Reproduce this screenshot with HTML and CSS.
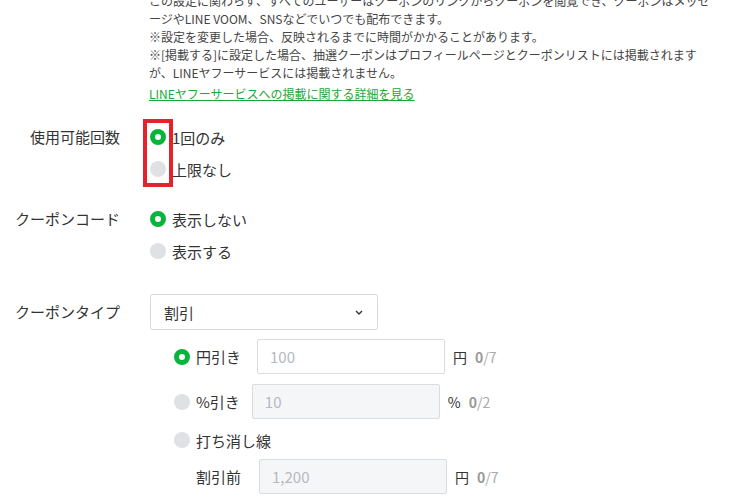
FILE: index.html
```html
<!DOCTYPE html>
<html lang="ja">
<head>
<meta charset="utf-8">
<title>クーポン設定</title>
<link rel="stylesheet" href="styles.css">
</head>
<body>
<div class="page">
  <div class="desc">
    <p>この設定に関わらず、すべてのユーザーはクーポンのリンクからクーポンを閲覧でき、クーポンはメッセ<br>ージやLINE VOOM、SNSなどでいつでも配布できます。</p>
    <p>※設定を変更した場合、反映されるまでに時間がかかることがあります。</p>
    <p>※[掲載する]に設定した場合、抽選クーポンはプロフィールページとクーポンリストには掲載されます<br>が、LINEヤフーサービスには掲載されません。</p>
    <a class="link" href="#">LINEヤフーサービスへの掲載に関する詳細を見る</a>
  </div>

  <div class="row">
    <div class="label">使用可能回数</div>
    <div class="options">
      <label class="radio on"><span class="dot"></span>1回のみ</label>
      <label class="radio"><span class="dot"></span>上限なし</label>
      <span class="highlight"></span>
    </div>
  </div>

  <div class="row">
    <div class="label">クーポンコード</div>
    <div class="options">
      <label class="radio on"><span class="dot"></span>表示しない</label>
      <label class="radio"><span class="dot"></span>表示する</label>
    </div>
  </div>

  <div class="row row-type">
    <div class="label label-tall">クーポンタイプ</div>
    <div class="field">
      <div class="select">
        <span>割引</span>
        <svg class="chev" width="8" height="5" viewBox="0 0 8 5"><path d="M1 1 L4 4 L7 1" fill="none" stroke="#333" stroke-width="1.4"/></svg>
      </div>
      <div class="sub">
        <div class="sub-row">
          <label class="radio radio-sm on"><span class="dot"></span>円引き</label>
          <input class="input in-yen" type="text" placeholder="100">
          <span class="unit">円</span>
          <span class="count"><b>0</b>/7</span>
        </div>
        <div class="sub-row sub-gap">
          <label class="radio radio-sm"><span class="dot"></span>%引き</label>
          <input class="input in-pct disabled" type="text" placeholder="10" disabled>
          <span class="unit">%</span>
          <span class="count"><b>0</b>/2</span>
        </div>
        <div class="sub-row sub-radio">
          <label class="radio radio-sm"><span class="dot"></span>打ち消し線</label>
        </div>
        <div class="sub-row sub-last">
          <span class="sub-label">割引前</span>
          <input class="input in-before disabled" type="text" placeholder="1,200" disabled>
          <span class="unit">円</span>
          <span class="count"><b>0</b>/7</span>
        </div>
      </div>
    </div>
  </div>
</div>
</body>
</html>
```

FILE: styles.css
```css
* { box-sizing: border-box; }

body {
  margin: 0;
  background: #fff;
  color: #333;
  font-family: "Noto Sans CJK JP", "Noto Sans", sans-serif;
  overflow: hidden;
}

.page {
  width: 731px;
  height: 502px;
  overflow: hidden;
}

.desc {
  margin: -8px 0 0 149px;
  font-size: 12px;
  line-height: 18px;
  color: #444;
}

.desc p {
  margin: 0;
  white-space: nowrap;
}

.link {
  display: block;
  width: max-content;
  margin-top: 3px;
  color: #19a83a;
  text-decoration: underline;
}

.row {
  display: flex;
  gap: 30px;
  margin-top: 18px;
  font-size: 15px;
}

.label {
  flex: none;
  width: 120px;
  text-align: right;
  line-height: 32px;
}

.label-tall { line-height: 36px; }

.options {
  position: relative;
  display: flex;
  flex-direction: column;
}

.radio {
  display: flex;
  align-items: center;
  gap: 6px;
  height: 32px;
  white-space: nowrap;
}

.dot {
  flex: none;
  width: 16px;
  height: 16px;
  border-radius: 50%;
  background: #dfe1e5;
}

.radio.on .dot {
  background: #fff;
  border: 5px solid #09b43a;
}

.highlight {
  position: absolute;
  left: -7px;
  top: -2px;
  width: 30px;
  height: 68px;
  border: 4px solid #e3222b;
}

.row-type { margin-top: 27px; }

.field {
  display: flex;
  flex-direction: column;
}

.select {
  width: 228px;
  height: 36px;
  border: 1px solid #d5d8dc;
  border-radius: 3px;
  display: flex;
  align-items: center;
  justify-content: space-between;
  padding: 0 14px 0 13px;
}

.chev { display: block; }

.sub {
  margin-top: 9px;
  padding-left: 24px;
}

.sub-row {
  display: flex;
  align-items: center;
  height: 35px;
  white-space: nowrap;
}

.sub-gap { margin-top: 10px; }

.sub-radio {
  height: 24px;
  margin-top: 9px;
}

.sub-last { margin-top: 7px; }

.radio-sm { height: 24px; }

.sub-label { margin-left: 22px; }

.input {
  width: 188px;
  height: 35px;
  margin-left: 16px;
  border: 1px solid #d9dce0;
  border-radius: 2px;
  padding: 0 12px;
  font-family: inherit;
  font-size: 15px;
  color: #333;
  background: #fff;
  outline: none;
}

.input.disabled { background: #f5f6f8; }

.input::placeholder { color: #b5b9bf; }

.in-pct { margin-left: 12px; }

.in-before { margin-left: 18px; }

.unit {
  margin-left: 8px;
  font-size: 14px;
}

.count {
  margin-left: 8px;
  font-size: 14px;
  color: #aaa;
}

.count b { color: #999; }
```
